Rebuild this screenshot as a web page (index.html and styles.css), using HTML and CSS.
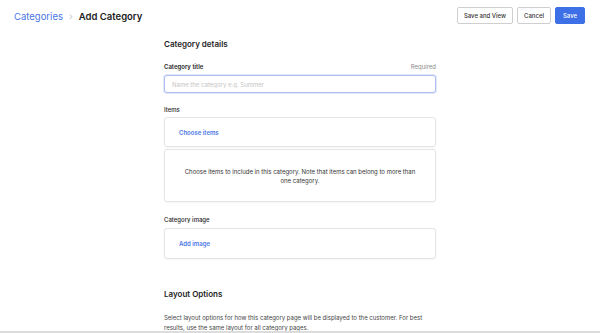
FILE: index.html
```html
<!DOCTYPE html>
<html lang="en">
<head>
    <meta charset="UTF-8">
    <meta name="viewport" content="width=device-width, initial-scale=1.0">
    <title>Add Category</title>
    <link rel="stylesheet" href="styles.css">
</head>
<body>
    <header class="topbar">
        <div class="breadcrumb">
            <a class="breadcrumb__link" href="#">Categories</a>
            <span class="breadcrumb__sep">&rsaquo;</span>
            <span class="breadcrumb__current">Add Category</span>
        </div>
        <div class="actions">
            <button class="btn">Save and View</button>
            <button class="btn">Cancel</button>
            <button class="btn btn--primary">Save</button>
        </div>
    </header>

    <main class="form">
        <h2 class="form__heading">Category details</h2>

        <div class="field__label">
            <span class="field__name">Category title</span>
            <span class="field__hint">Required</span>
        </div>
        <input class="field__input" placeholder="Name the category e.g. Summer" />

        <div class="field__label field__label--items">
            <span class="field__name field__name--light">Items</span>
        </div>
        <div class="card">
            <a class="card__link" href="#">Choose items</a>
        </div>
        <div class="card card--body">
            <p class="card__text">Choose items to include in this category. Note that items can belong to more than one category.</p>
        </div>

        <div class="field__label field__label--image">
            <span class="field__name field__name--light">Category image</span>
        </div>
        <div class="card card--image">
            <a class="card__link" href="#">Add image</a>
        </div>

        <h2 class="form__heading form__heading--layout">Layout Options</h2>
        <p class="form__text">Select layout options for how this category page will be displayed to the customer. For best results, use the same layout for all category pages.</p>
    </main>

    <div class="bottombar"></div>
</body>
</html>
```

FILE: styles.css
```css
:root {
    --blue: #3d6fe6;
    --link: #4a76e4;
    --text: #1e1e1e;
    --muted: #8a8a8a;
    --line: #e4e4e4;
}

* {
    margin: 0;
    padding: 0;
    box-sizing: border-box;
}

body {
    font-family: Inter, "Open Sans", sans-serif;
    color: var(--text);
    background: #fff;
}

.topbar {
    height: 31px;
    display: flex;
    align-items: center;
    justify-content: space-between;
    padding: 0 15px 0 14px;
}

.breadcrumb {
    display: flex;
    align-items: center;
    gap: 6px;
    font-size: 9.5px;
    padding-top: 1px;
}

.breadcrumb__link {
    color: var(--link);
    text-decoration: none;
}

.breadcrumb__sep {
    color: #c8c8c8;
    font-size: 10px;
}

.breadcrumb__current {
    font-weight: 600;
    color: #222;
}

.actions {
    display: flex;
    gap: 4px;
}

.btn {
    height: 17px;
    padding: 0 6px;
    border: 1px solid #cfcfcf;
    border-radius: 2px;
    background: #fff;
    color: #333;
    font-family: inherit;
    font-size: 6px;
    font-weight: 500;
}

.btn--primary {
    border-color: var(--blue);
    background: var(--blue);
    color: #fff;
    padding: 0 7px;
}

.form {
    width: 272px;
    margin: 0 auto;
}

.form__heading {
    margin-top: 7px;
    font-size: 8px;
    line-height: 12px;
    font-weight: 600;
}

.form__heading--layout {
    margin-top: 29px;
}

.field__label {
    display: flex;
    justify-content: space-between;
    margin-top: 12px;
    font-size: 6px;
    line-height: 10px;
}

.field__label--items {
    margin-top: 12px;
}

.field__label--image {
    margin-top: 13px;
}

.field__name {
    font-weight: 600;
}

.field__name--light {
    font-weight: 500;
}

.field__hint {
    color: var(--muted);
}

.field__input {
    display: block;
    width: 100%;
    height: 18px;
    margin-top: 3px;
    padding: 0 7px;
    border: 1px solid #aebcf2;
    border-radius: 3px;
    outline: 0;
    box-shadow: 0 0 0 1px #e3e8fb;
    font-family: inherit;
    font-size: 6px;
}

.field__input::placeholder {
    color: #c4c4c4;
}

.card {
    height: 30px;
    margin-top: 2px;
    display: flex;
    align-items: center;
    padding: 0 14px;
    border: 1px solid var(--line);
    border-radius: 3px;
    box-shadow: 0 1px 2px rgba(0, 0, 0, 0.04);
}

.card--body {
    height: 53px;
    margin-top: 2px;
    justify-content: center;
    padding: 1px 14px 0;
}

.card--image {
    height: 31px;
    margin-top: 3px;
}

.card__link {
    color: var(--link);
    font-size: 6px;
    font-weight: 600;
    text-decoration: none;
}

.card__text {
    font-size: 6px;
    line-height: 9px;
    text-align: center;
    color: #333;
}

.form__text {
    margin-top: 13px;
    font-size: 6px;
    line-height: 9.5px;
    color: #444;
    padding-right: 8px;
}

.bottombar {
    position: fixed;
    left: 0;
    right: 0;
    bottom: 0;
    height: 2px;
    background: #dcdcdc;
}
```
